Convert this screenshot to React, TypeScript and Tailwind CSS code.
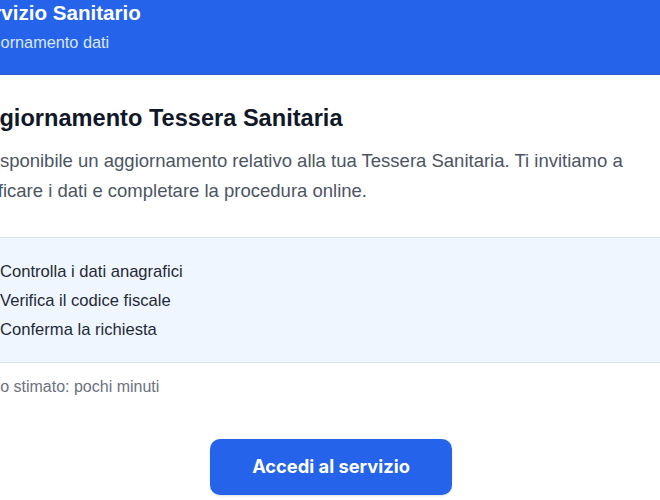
import React from "react";

const steps = [
  "Controlla i dati anagrafici",
  "Verifica il codice fiscale",
  "Conferma la richiesta",
];

export default function App() {
  return (
    <div className="w-[660px] h-[500px] overflow-hidden bg-white font-['Liberation_Sans',Arial,sans-serif]">
      <div className="-mx-[32px]">
        {/* header */}
        <header className="h-[75px] bg-[#2563eb] border-b border-[#2f5fc9]">
          <h2 className="text-[20.6px] leading-[26px] font-bold text-white">Servizio Sanitario</h2>
          <p className="mt-[6px] text-[16.3px] leading-[20px] text-[#dbe7fd]">Aggiornamento dati</p>
        </header>

        <main className="pb-10">
          <h1 className="mt-[29px] text-[23.6px] leading-[28px] font-bold text-[#111827]">
            Aggiornamento Tessera Sanitaria
          </h1>
          <p className="mt-[14px] text-[18.5px] leading-[30px] text-[#4b5563]">
            È disponibile un aggiornamento relativo alla tua Tessera Sanitaria. Ti invitiamo a
            verificare i dati e completare la procedura online.
          </p>

          <div className="mt-[31px] -mx-[40px] px-[40px] bg-[#eff6ff] border-y border-[#dbe4ee] pt-[19px] pb-[18px]">
            <ul className="flex flex-col pl-[12px]">
              {steps.map((s) => (
                <li key={s} className="flex items-center text-[16.6px] leading-[29px] text-[#1f2937]">
                  <span className="w-[20px] shrink-0 text-[#2563eb]">✓</span>
                  {s}
                </li>
              ))}
            </ul>
          </div>

          <p className="mt-[14px] -ml-[7px] text-[16px] leading-[20px] text-[#6b7280]">Tempo stimato: pochi minuti</p>

          <div className="mt-[42px] flex justify-center pl-[2px]">
            <button className="w-[242px] h-[56px] rounded-[10px] bg-[#2563eb] text-white text-[18.3px] font-bold font-['Inter',sans-serif] shadow-sm">
              Accedi al servizio
            </button>
          </div>
        </main>
      </div>
    </div>
  );
}
